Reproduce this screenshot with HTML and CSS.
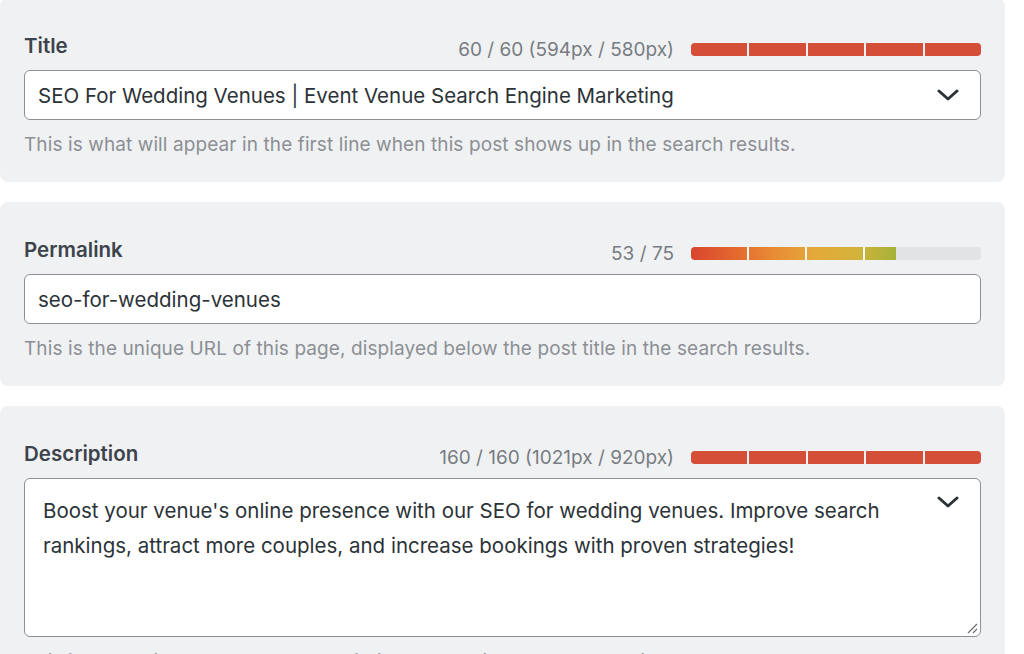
FILE: index.html
```html
<!DOCTYPE html>
<html lang="en">
<head>
    <meta charset="UTF-8">
    <title>SEO Fields</title>
    <link rel="stylesheet" href="styles.css">
</head>
<body>
    <div class="panel first">
        <div class="field-head">
            <span class="label">Title</span>
            <div class="meta">
                <span class="count">60 / 60 (594px / 580px)</span>
                <div class="bar">
                    <span class="seg red"></span><span class="seg red"></span><span class="seg red"></span><span class="seg red"></span><span class="seg red"></span>
                </div>
            </div>
        </div>
        <div class="box">
            <span class="value">SEO For Wedding Venues | Event Venue Search Engine Marketing</span>
            <svg class="chev" width="22" height="14" viewBox="0 0 22 14"><path d="M2 3 L11 11 L20 3" fill="none" stroke="#2c3338" stroke-width="3" stroke-linecap="round" stroke-linejoin="round"/></svg>
        </div>
        <p class="help">This is what will appear in the first line when this post shows up in the search results.</p>
    </div>

    <div class="panel">
        <div class="field-head">
            <span class="label">Permalink</span>
            <div class="meta">
                <span class="count">53 / 75</span>
                <div class="bar grey">
                    <div class="fill" style="width: 205px"></div>
                    <span class="gap" style="left: 56px"></span><span class="gap" style="left: 114px"></span><span class="gap" style="left: 172px"></span>
                </div>
            </div>
        </div>
        <div class="box">
            <span class="value">seo-for-wedding-venues</span>
        </div>
        <p class="help">This is the unique URL of this page, displayed below the post title in the search results.</p>
    </div>

    <div class="panel">
        <div class="field-head">
            <span class="label">Description</span>
            <div class="meta">
                <span class="count">160 / 160 (1021px / 920px)</span>
                <div class="bar">
                    <span class="seg red"></span><span class="seg red"></span><span class="seg red"></span><span class="seg red"></span><span class="seg red"></span>
                </div>
            </div>
        </div>
        <div class="box area">
            <span class="value">Boost your venue's online presence with our SEO for wedding venues. Improve search rankings, attract more couples, and increase bookings with proven strategies!</span>
            <svg class="chev" width="22" height="14" viewBox="0 0 22 14"><path d="M2 3 L11 11 L20 3" fill="none" stroke="#2c3338" stroke-width="3" stroke-linecap="round" stroke-linejoin="round"/></svg>
            <svg class="grip" width="12" height="12" viewBox="0 0 12 12"><path d="M11 2 L2 11 M11 7 L7 11" stroke="#6b6f75" stroke-width="1.2" fill="none"/></svg>
        </div>
        <p class="help">This is what will appear as the description when this post shows up in the search results.</p>
    </div>
</body>
</html>
```

FILE: styles.css
```css
body {
    margin: 0;
    padding: 0;
    background-color: #fff;
    font-family: Inter, "Noto Sans", sans-serif;
    color: #2c3338;
}
.panel {
    width: 1005px;
    box-sizing: border-box;
    background-color: #f0f1f3;
    border-radius: 8px;
    padding: 34px 24px 25px 24px;
    margin-bottom: 20px;
}
.panel.first {
    margin-top: -2px;
}
.field-head {
    display: flex;
    justify-content: space-between;
    align-items: center;
    height: 26px;
    margin-bottom: 12px;
}
.label {
    font-size: 20.5px;
    font-weight: 600;
    color: #3c434a;
}
.meta {
    display: flex;
    align-items: center;
    margin-top: 8px;
}
.count {
    font-size: 19px;
    color: #787c82;
    margin-right: 17px;
}
.bar {
    position: relative;
    display: flex;
    gap: 2px;
    width: 290px;
    height: 13px;
    border-radius: 4px;
    overflow: hidden;
}
.seg {
    flex: 1;
}
.seg.red {
    background-color: #d54e37;
}
.bar.grey {
    background-color: #e2e3e4;
}
.fill {
    height: 100%;
    background: linear-gradient(to right, #d9452f 0%, #e4692f 22%, #e88a34 40%, #e4a93a 60%, #d5b33a 80%, #a4b23a 100%);
}
.gap {
    position: absolute;
    top: 0;
    width: 2px;
    height: 100%;
    background-color: #f6f6f6;
}
.box {
    position: relative;
    display: flex;
    align-items: center;
    height: 50px;
    box-sizing: border-box;
    background-color: #fff;
    border: 1.5px solid #8c8f94;
    border-radius: 6px;
    padding: 0 13px;
    font-size: 20.5px;
    color: #2c3338;
}
.box .chev {
    position: absolute;
    right: 21px;
    top: 17px;
}
.box.area {
    height: 159px;
    align-items: flex-start;
    padding: 14px 80px 0 18px;
    line-height: 35px;
}
.box.area .chev {
    top: 16px;
}
.grip {
    position: absolute;
    right: 2px;
    bottom: 2px;
}
.help {
    margin: 13px 0 0 0;
    font-size: 19px;
    line-height: 24px;
    color: #8c8f94;
    letter-spacing: 0.1px;
}
```
